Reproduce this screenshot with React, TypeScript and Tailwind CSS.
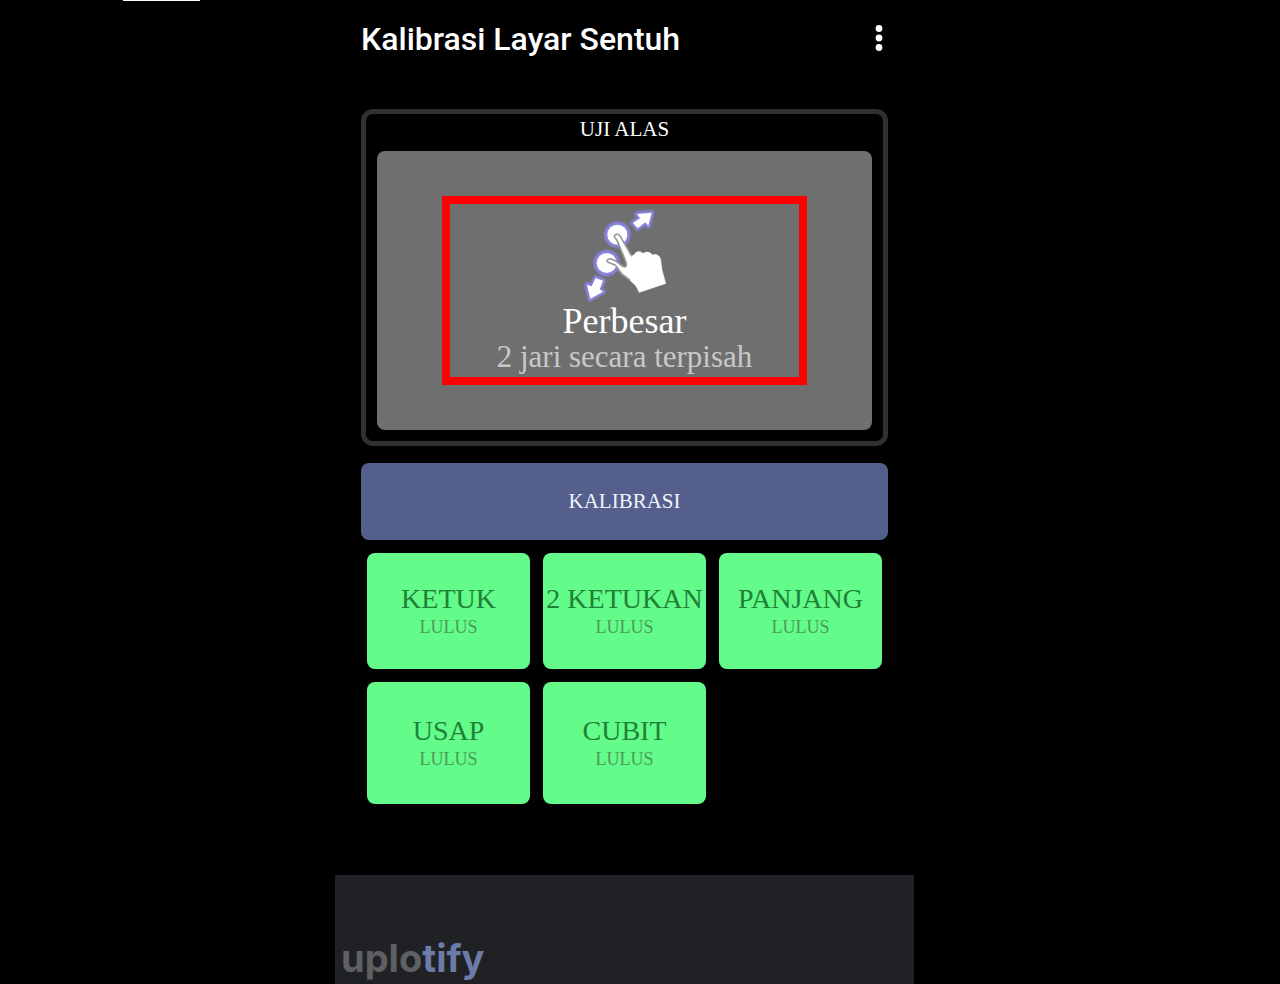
import { useState } from 'react';

interface TestTile {
  id: string;
  label: string;
  status: string;
}

const tests: TestTile[] = [
  { id: 'tap', label: 'KETUK', status: 'LULUS' },
  { id: 'double-tap', label: '2 KETUKAN', status: 'LULUS' },
  { id: 'long-press', label: 'PANJANG', status: 'LULUS' },
  { id: 'swipe', label: 'USAP', status: 'LULUS' },
  { id: 'pinch', label: 'CUBIT', status: 'LULUS' },
];

function MoreIcon() {
  return (
    <svg viewBox="0 0 8 28" className="h-7 w-2" fill="#fff" aria-hidden="true">
      <circle cx="4" cy="3.5" r="3.4" />
      <circle cx="4" cy="13" r="3.4" />
      <circle cx="4" cy="22.5" r="3.4" />
    </svg>
  );
}

function PinchIcon() {
  const upArrow = 'M191 84 L212 70 L203 57 L247 53 L237 92 L228 82 L205 100 Z';
  const downArrow = 'M79 249 L101 257 L91 283 L101 290 L63 311 L53 269 L67 274 Z';

  return (
    <svg viewBox="-13 27 360 297" className="block h-[99px] w-[120px]" aria-hidden="true">
      {/* glow around the touch points and arrows */}
      <g fill="none" stroke="#8783dc" strokeLinejoin="round">
        <g strokeWidth="20" opacity="0.4">
          <circle cx="144" cy="119" r="32" />
          <circle cx="112" cy="204" r="32" />
          <path d={upArrow} />
          <path d={downArrow} />
        </g>
        <g strokeWidth="12">
          <circle cx="144" cy="119" r="32" />
          <circle cx="112" cy="204" r="32" />
          <path d={upArrow} />
          <path d={downArrow} />
        </g>
      </g>
      <g fill="#fff">
        <circle cx="144" cy="119" r="30" />
        <circle cx="112" cy="204" r="30" />
        <path d={upArrow} />
        <path d={downArrow} />
      </g>
      {/* hand */}
      <path
        d="M135 126 C134 116 148 115 153 124 L187 183 C192 184 193 181 196 178 C202 169 213 168 221 177 C231 168 245 173 249 181 C261 176 271 183 273 194 L277 225 L288 265 L210 291 C205 276 195 265 183 256 L159 238 C148 229 143 213 137 210 L116 202 C107 196 119 189 129 193 C145 197 153 213 166 216 C173 215 172 207 168 196 L143 136 Z"
        fill="#fff"
        stroke="#9a9a94"
        strokeWidth="5"
        strokeLinejoin="round"
      />
      <path
        d="M187 183 C192 184 193 181 196 178 C202 169 213 168 221 177 C231 168 245 173 249 181 C261 176 271 183 273 194 L277 225 L288 265 L210 291 C205 276 195 265 183 256"
        fill="#fff"
        stroke="#fff"
        strokeWidth="3"
      />
    </svg>
  );
}

export default function App() {
  const [menuOpen, setMenuOpen] = useState(false);

  return (
    <div className="flex min-h-screen flex-col bg-black text-white">
      <div className="ml-[123px] h-px w-[77px] bg-white" />

      <div className="flex flex-1 justify-center pr-[31px]">
        <div className="flex w-full max-w-[579px] flex-col">
          <header className="flex items-center justify-between px-[26px] pt-5">
            <h1 className="font-[Roboto,sans-serif] text-[32px] leading-9 font-medium">Kalibrasi Layar Sentuh</h1>
            <button
              type="button"
              aria-label="Menu"
              aria-expanded={menuOpen}
              onClick={() => setMenuOpen(!menuOpen)}
              className="px-[5px]"
            >
              <MoreIcon />
            </button>
          </header>

          <main className="px-[26px] pt-[52px] font-['Liberation_Serif',serif]">
            {/* Touch pad */}
            <section className="rounded-xl border-[5px] border-[#303030] px-[11px] pb-[11px]">
              <h2 className="pb-[7px] text-center text-[21px] leading-[30px]">UJI ALAS</h2>
              <div className="flex justify-center rounded-lg bg-[#6f6f6f] py-[45px]">
                <div className="flex w-[365px] flex-col items-center border-8 border-[#ff0000] pb-[2px]">
                  <PinchIcon />
                  <p className="text-[36px] leading-9">Perbesar</p>
                  <p className="text-[31px] leading-9 text-[#c8c8c8]">2 jari secara terpisah</p>
                </div>
              </div>
            </section>

            <button
              type="button"
              className="mt-[17px] h-[77px] w-full rounded-lg bg-[#545f8c] text-[21px] text-[#f0f4ff]"
            >
              KALIBRASI
            </button>

            {/* Test results */}
            <div className="mt-[13px] grid grid-cols-3 grid-rows-[116px_122px] gap-[13px] px-[6px]">
              {tests.map((test) => (
                <button
                  key={test.id}
                  type="button"
                  className="flex flex-col items-center justify-center rounded-lg bg-[#63fb89]"
                >
                  <span className="text-[28px] leading-8 whitespace-nowrap text-[#1f8138]">{test.label}</span>
                  <span className="text-[18px] leading-6 text-[#4c9a58]">{test.status}</span>
                </button>
              ))}
            </div>
          </main>

          <footer className="mt-auto flex h-[109px] items-end bg-[#202124] px-[6px] pb-1">
            <p className="font-['Inter',sans-serif] text-[38px] leading-[44px] font-bold text-[#5f6063]">
              uplo<span className="text-[#6c7ba8]">tify</span>
            </p>
          </footer>
        </div>
      </div>
    </div>
  );
}
